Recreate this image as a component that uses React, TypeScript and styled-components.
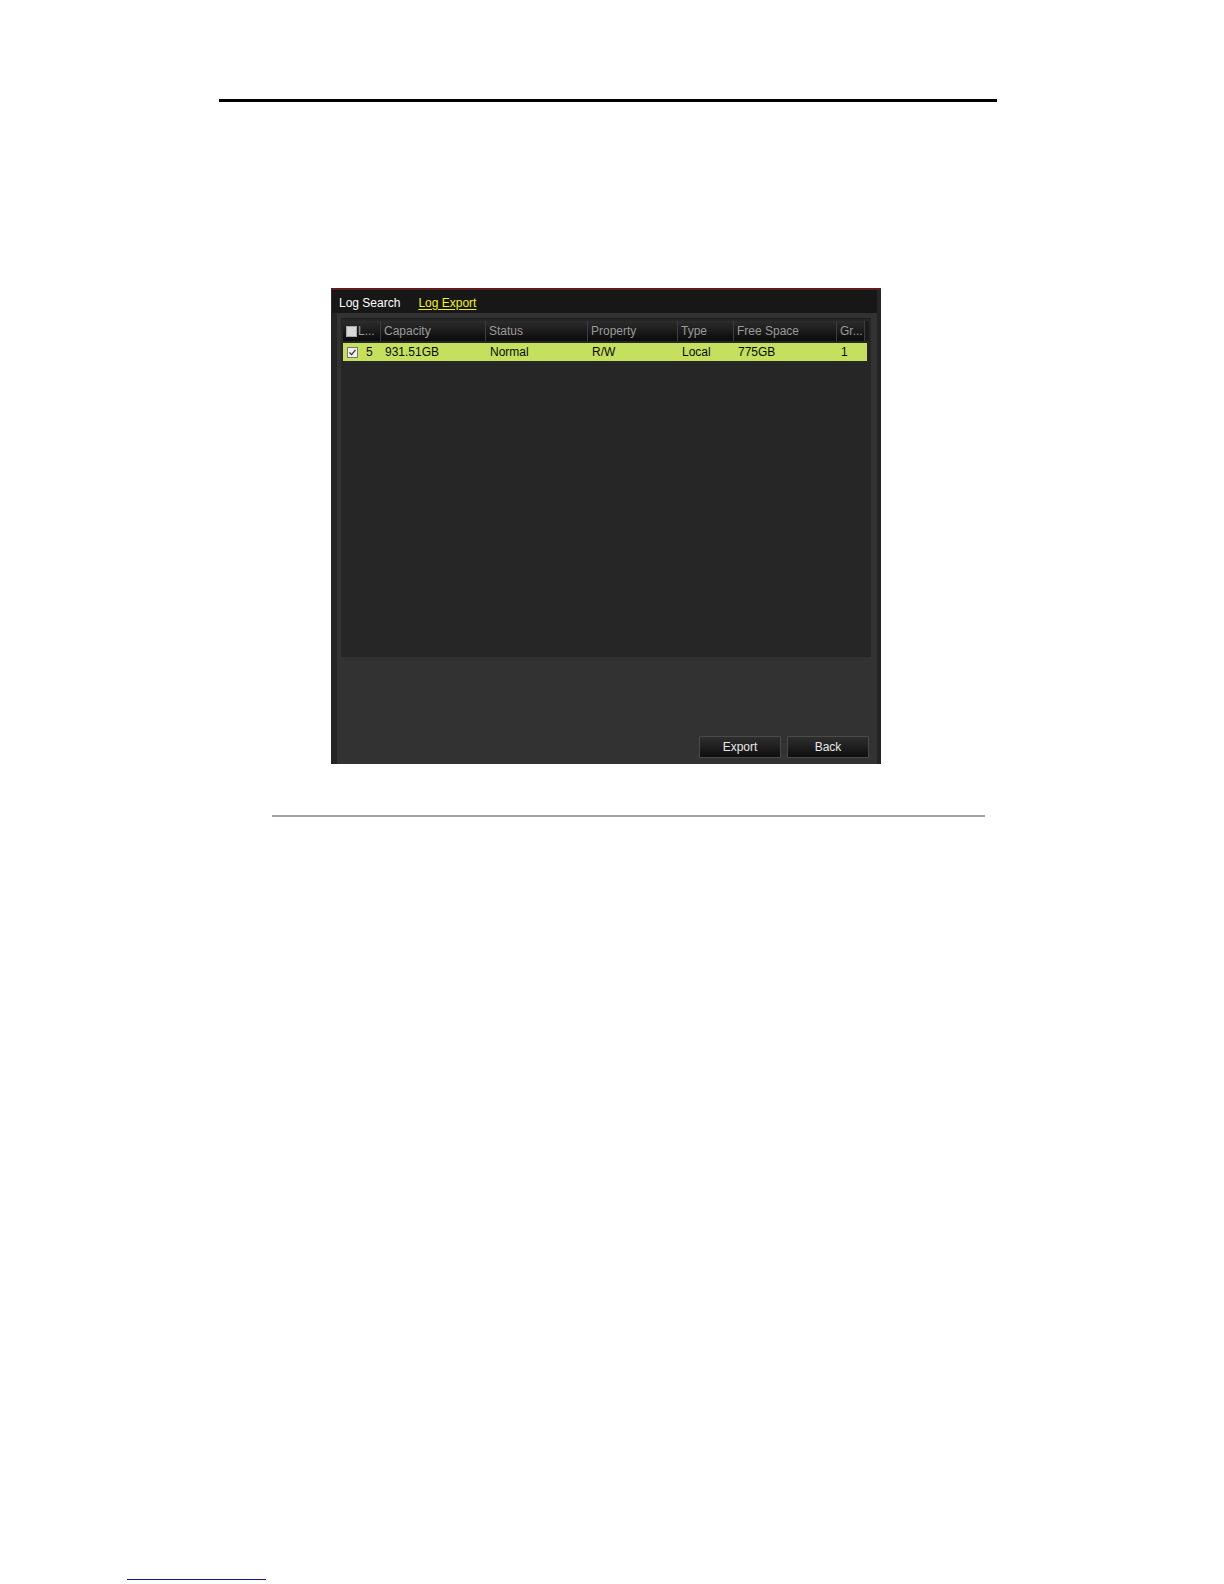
import React from 'react';
import styled, { createGlobalStyle } from 'styled-components';

const GlobalStyle = createGlobalStyle`
  body {
    margin: 0;
    background: #ffffff;
    font-family: "Liberation Sans", Arial, sans-serif;
  }
`;

type Column = { key: string; label: string; width: number };

const columns: Column[] = [
  { key: 'no', label: 'L...', width: 38 },
  { key: 'capacity', label: 'Capacity', width: 105 },
  { key: 'status', label: 'Status', width: 102 },
  { key: 'property', label: 'Property', width: 90 },
  { key: 'type', label: 'Type', width: 56 },
  { key: 'free', label: 'Free Space', width: 103 },
  { key: 'group', label: 'Gr...', width: 28 },
];

const rows = [
  {
    no: '5',
    capacity: '931.51GB',
    status: 'Normal',
    property: 'R/W',
    type: 'Local',
    free: '775GB',
    group: '1',
  },
];

const gridTemplate = columns.map((c) => `${c.width}px`).join(' ') + ' 1fr';

const App: React.FC = () => {
  return (
    <Page>
      <GlobalStyle />
      <TopRule />

      <Panel>
        <TabBar>
          <Tab>Log Search</Tab>
          <Tab $active>Log Export</Tab>
        </TabBar>

        <PanelBody>
          <TableFrame>
            <HeaderRow>
              {columns.map((c, i) => (
                <HeaderCell key={c.key}>
                  {i === 0 && <HeaderBox />}
                  {c.label}
                </HeaderCell>
              ))}
              <ScrollCell />
            </HeaderRow>

            {rows.map((r) => (
              <DataRow key={r.no} $selected>
                <DataCell>
                  <RowBox>
                    <svg width="9" height="9" viewBox="0 0 9 9">
                      <path d="M1.5 4.5 L3.6 6.6 L7.5 1.8" fill="none" stroke="#333" strokeWidth="1.3" />
                    </svg>
                  </RowBox>
                  {r.no}
                </DataCell>
                <DataCell>{r.capacity}</DataCell>
                <DataCell>{r.status}</DataCell>
                <DataCell>{r.property}</DataCell>
                <DataCell>{r.type}</DataCell>
                <DataCell>{r.free}</DataCell>
                <DataCell>{r.group}</DataCell>
              </DataRow>
            ))}
          </TableFrame>

          <Footer>
            <ActionButton>Export</ActionButton>
            <ActionButton>Back</ActionButton>
          </Footer>
        </PanelBody>
      </Panel>

      <BottomRule />
      <LinkRule />
    </Page>
  );
};

export default App;

const Page = styled.div`
  width: 1224px;
  height: 1584px;
  padding-top: 99px;
  box-sizing: border-box;
  overflow: hidden;
`;

const TopRule = styled.div`
  margin-left: 219px;
  width: 778px;
  height: 3px;
  background: #000;
`;

const Panel = styled.div`
  margin: 186px 0 0 331px;
  width: 550px;
  height: 476px;
  display: flex;
  flex-direction: column;
  background: #2a2a2a;
  border-top: 2px solid #5e1c1c;
  box-sizing: border-box;
`;

const TabBar = styled.div`
  height: 23px;
  display: flex;
  align-items: center;
  gap: 18px;
  padding: 2px 0 0 7px;
  background: #171717;
  border-left: 1px solid #2c2c2c;
  border-right: 4px solid #262626;
  box-sizing: border-box;
`;

const Tab = styled.span<{ $active?: boolean }>`
  font-size: 12px;
  color: ${(p) => (p.$active ? '#f2f22a' : '#ffffff')};
  text-decoration: ${(p) => (p.$active ? 'underline' : 'none')};
  text-underline-offset: 2px;
`;

const PanelBody = styled.div`
  flex: 1;
  display: flex;
  flex-direction: column;
  padding: 5px 6px 0 4px;
  background: #323232;
  border-left: 6px solid #242424;
  border-right: 4px solid #242424;
  box-sizing: border-box;
`;

const TableFrame = styled.div`
  height: 339px;
  padding: 2px;
  background: #262626;
  border-top: 1px solid #1e1e1e;
  box-sizing: border-box;
`;

const HeaderRow = styled.div`
  display: grid;
  grid-template-columns: ${gridTemplate};
  height: 20px;
`;

const HeaderCell = styled.div`
  display: flex;
  align-items: center;
  padding-left: 3px;
  font-size: 12px;
  color: #9a9a9a;
  background: linear-gradient(#2c2c2c, #0a0a0a);
  border-right: 1px solid #3c3c3c;
  white-space: nowrap;
  overflow: hidden;
`;

const ScrollCell = styled.div`
  background: #1c1c1c;
`;

const HeaderBox = styled.span`
  width: 11px;
  height: 11px;
  margin-right: 1px;
  background: #d8d8d8;
  border: 1px solid #a8a8a8;
  box-sizing: border-box;
`;

const DataRow = styled.div<{ $selected?: boolean }>`
  display: grid;
  grid-template-columns: ${gridTemplate};
  height: 18px;
  margin-top: 2px;
  margin-right: 2px;
  background: ${(p) => (p.$selected ? '#c4e05e' : 'transparent')};
`;

const DataCell = styled.div`
  display: flex;
  align-items: center;
  gap: 8px;
  padding-left: 4px;
  font-size: 12px;
  color: #0a0a0a;
  white-space: nowrap;
`;

const RowBox = styled.span`
  width: 11px;
  height: 11px;
  display: flex;
  align-items: center;
  justify-content: center;
  background: #f0f0f0;
  border: 1px solid #777;
  box-sizing: border-box;
`;

const Footer = styled.div`
  flex: 1;
  display: flex;
  justify-content: flex-end;
  align-items: flex-end;
  gap: 6px;
  padding: 0 2px 6px 0;
`;

const ActionButton = styled.button`
  width: 82px;
  height: 22px;
  padding: 0;
  font-family: "Liberation Sans", Arial, sans-serif;
  font-size: 12px;
  color: #e8e8e8;
  background: linear-gradient(#2e2e2e, #0e0e0e);
  border: 1px solid #4a4a4a;
  border-radius: 1px;
`;

const BottomRule = styled.div`
  margin: 51px 0 0 272px;
  width: 713px;
  height: 2px;
  background: #a2a2a2;
`;

const LinkRule = styled.div`
  margin: 762px 0 0 127px;
  width: 139px;
  height: 1px;
  background: #1a1a8c;
`;
